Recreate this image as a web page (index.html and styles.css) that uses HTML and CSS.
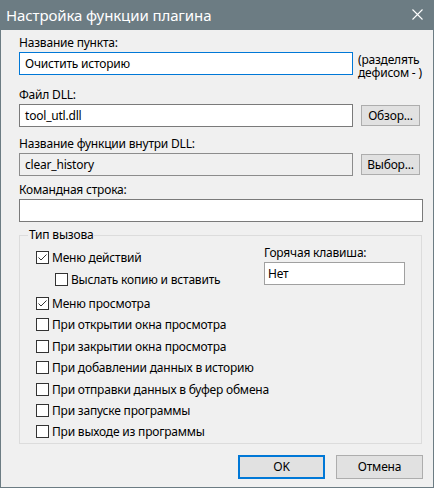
FILE: index.html
```html
<!DOCTYPE html>
<html lang="ru">
<head>
<meta charset="utf-8">
<title>Настройка функции плагина</title>
<link rel="stylesheet" href="styles.css">
</head>
<body>
<div class="window">
  <div class="titlebar">
    <span class="title">Настройка функции плагина</span>
    <svg class="close" width="11" height="11" viewBox="0 0 11 11"><path d="M0.5 0.5 L10.5 10.5 M10.5 0.5 L0.5 10.5" stroke="#fff" stroke-width="1.1" fill="none"/></svg>
  </div>
  <div class="content">
    <div class="label l1">Название пункта:</div>
    <div class="row">
      <div class="field wide focused">Очистить историю</div>
      <div class="hint"><span class="hint-line">(разделять</span><span class="hint-line">дефисом - )</span></div>
    </div>

    <div class="label l2">Файл DLL:</div>
    <div class="row">
      <div class="field wide">tool_utl.dll</div>
      <div class="btn small">Обзор...</div>
    </div>

    <div class="label l3">Название функции внутри DLL:</div>
    <div class="row">
      <div class="field wide disabled">clear_history</div>
      <div class="btn small">Выбор...</div>
    </div>

    <div class="label l4">Командная строка:</div>
    <div class="row">
      <div class="field full"></div>
    </div>

    <fieldset class="group">
      <legend class="legend">Тип вызова</legend>
      <div class="group-body">
        <div class="checks">
          <div class="check"><span class="box"><svg width="11" height="11" viewBox="0 0 11 11"><path d="M1.5 5.5 L4 8 L9.5 2.5" stroke="#333" stroke-width="1" fill="none"/></svg></span>Меню действий</div>
          <div class="check sub"><span class="box"></span>Выслать копию и вставить</div>
          <div class="check"><span class="box"><svg width="11" height="11" viewBox="0 0 11 11"><path d="M1.5 5.5 L4 8 L9.5 2.5" stroke="#333" stroke-width="1" fill="none"/></svg></span>Меню просмотра</div>
          <div class="check"><span class="box"></span>При открытии окна просмотра</div>
          <div class="check"><span class="box"></span>При закрытии окна просмотра</div>
          <div class="check"><span class="box"></span>При добавлении данных в историю</div>
          <div class="check"><span class="box"></span>При отправки данных в буфер обмена</div>
          <div class="check"><span class="box"></span>При запуске программы</div>
          <div class="check"><span class="box"></span>При выходе из программы</div>
        </div>
        <div class="hotkey">
          <div class="label">Горячая клавиша:</div>
          <div class="field hk">Нет</div>
        </div>
      </div>
    </fieldset>

    <div class="buttons">
      <div class="btn dlg default">OK</div>
      <div class="btn dlg">Отмена</div>
    </div>
  </div>
</div>
</body>
</html>
```
FILE: styles.css
```css
* { box-sizing: border-box; }
html, body { margin: 0; padding: 0; }
body {
  font-family: "Noto Sans", "Open Sans", sans-serif;
  font-size: 12px;
  letter-spacing: -0.2px;
  color: #000;
  background: #f0f0f0;
}
.window {
  width: 434px;
  height: 488px;
  background: #f0f0f0;
  border: 1px solid #6c7c83;
  border-top: none;
}
.titlebar {
  height: 30px;
  margin: 0 -1px;
  background: #6c7c83;
  display: flex;
  align-items: center;
  justify-content: space-between;
  padding: 0 11px 0 6px;
}
.title {
  color: #fff;
  font-size: 15px;
  letter-spacing: -0.1px;
  line-height: 30px;
  margin-top: -1px;
}
.close { display: block; margin-top: -1px; }

.content {
  padding: 0 0 0 18px;
}
.label {
  line-height: 18px;
  height: 18px;
  white-space: nowrap;
}
.l1 { margin-top: 4px; }
.l2 { margin-top: 11px; }
.l3 { margin-top: 8px; }
.l4 { margin-top: 5px; }

.row {
  display: flex;
  align-items: center;
  gap: 8px;
  height: 23px;
}
.field {
  height: 23px;
  border: 1px solid #7a7a7a;
  background: #fff;
  padding: 0 5px;
  line-height: 21px;
  white-space: nowrap;
}
.field.wide { width: 334px; }
.field.full { width: 404px; }
.field.focused { border-color: #0078d7; }
.field.disabled { background: #f0f0f0; border-color: #8c8c8c; }
.hint {
  align-self: flex-start;
  height: 23px;
  margin-top: 1px;
  margin-left: -3px;
  display: flex;
  flex-direction: column;
}
.hint-line {
  display: block;
  height: 14px;
  line-height: 13px;
  white-space: nowrap;
}
.btn {
  background: #e1e1e1;
  border: 1px solid #adadad;
  display: flex;
  align-items: center;
  justify-content: center;
  white-space: nowrap;
}
.btn.small {
  width: 59px;
  height: 21px;
}

.group {
  margin: 5px 0 0 0;
  padding: 0;
  width: 403px;
  border: 1px solid #dcdcdc;
  min-inline-size: 0;
}
.legend {
  margin-left: 8px;
  padding: 0 1px;
  line-height: 16px;
  height: 16px;
}
.group-body {
  display: flex;
  padding-top: 4px;
}
.checks {
  width: 244px;
  padding-left: 16px;
}
.check {
  display: flex;
  align-items: center;
  height: 21.4px;
  white-space: nowrap;
}
.check.sub {
  padding-left: 19px;
  margin-bottom: 3px;
}
.box {
  width: 13px;
  height: 13px;
  border: 1px solid #333;
  background: #fff;
  margin-right: 3px;
  flex: none;
  display: flex;
}
.box svg { display: block; }
.hotkey {
  margin-top: -3px;
}
.field.hk {
  width: 141px;
  border-color: #a0a0a0;
  padding-left: 3px;
}

.buttons {
  display: flex;
  justify-content: flex-end;
  gap: 11px;
  margin-top: 11px;
  padding-right: 10px;
}
.btn.dlg {
  width: 87px;
  height: 24px;
}
.btn.default {
  border: 2px solid #0078d7;
}
```
